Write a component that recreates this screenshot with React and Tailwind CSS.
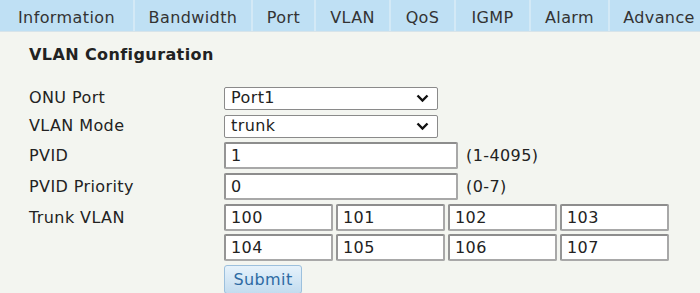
import React from "react";

const tabs = [
  ["Information", "w-[133px]"],
  ["Bandwidth", "w-[118px]"],
  ["Port", "w-[63px]"],
  ["VLAN", "w-[75px]"],
  ["QoS", "w-[65px]"],
  ["IGMP", "w-[75px]"],
  ["Alarm", "w-[79px]"],
  ["Advance", "w-[100px]"],
];

function Chevron() {
  return (
    <svg width="13" height="9" viewBox="0 0 13 9" className="absolute right-[8px] top-1/2 -translate-y-1/2">
      <path d="M1.5 2 L6.5 7 L11.5 2" fill="none" stroke="#111" strokeWidth="2.4" />
    </svg>
  );
}

function Select({ value }) {
  return (
    <div className="relative w-[214px] h-[23px] bg-white border border-[#8a8a8a] rounded-[2px] pl-[6px] flex items-center text-[#222]">
      {value}
      <Chevron />
    </div>
  );
}

function Input({ value, w }) {
  return (
    <div className={`${w} h-[27px] bg-white border-2 border-[#a8a8a8] border-t-[#8d8d8d] border-l-[#959595] rounded-[2px] pl-[5px] flex items-center text-[#222]`}>
      {value}
    </div>
  );
}

export default function App() {
  return (
    <div
      className="w-[700px] h-[293px] overflow-hidden bg-[#f3f5f0] text-[#222] text-[16px] tracking-[0.4px] leading-[24px]"
      style={{ fontFamily: '"DejaVu Sans", Verdana, sans-serif' }}
    >
      <div className="flex h-[32px] bg-[#bfe0f4] border-b border-[#d7e4ea]">
        {tabs.map(([t, w], i) => (
          <div key={t} className={`${w} shrink-0 flex items-center justify-center pt-[4px] text-[#333] ${i > 0 ? "border-l-2 border-[#d3e9f6]" : ""}`}>
            {t}
          </div>
        ))}
      </div>
      <div className="pl-[29px] pt-[12px]">
        <div className="font-bold h-[22px] flex items-center text-[#222]">VLAN Configuration</div>
        <div className="mt-[20px] grid grid-cols-[195px_1fr] gap-y-[4px] items-center">
          <div>ONU Port</div>
          <Select value="Port1" />
          <div>VLAN Mode</div>
          <Select value="trunk" />
          <div>PVID</div>
          <div className="flex items-center gap-[8px]">
            <Input value="1" w="w-[234px]" />
            <span>(1-4095)</span>
          </div>
          <div>PVID Priority</div>
          <div className="flex items-center gap-[8px]">
            <Input value="0" w="w-[234px]" />
            <span>(0-7)</span>
          </div>
          <div className="self-start pt-[2px]">Trunk VLAN</div>
          <div className="grid grid-cols-[109px_109px_109px_109px] gap-[3px]">
            {["100", "101", "102", "103", "104", "105", "106", "107"].map((v) => (
              <Input key={v} value={v} w="w-[109px]" />
            ))}
          </div>
          <div></div>
          <div className="w-[78px] h-[29px] rounded-[3px] border border-[#9cc0dd] bg-gradient-to-b from-[#e6f2fb] to-[#c3dcef] text-[#2d6aa3] flex items-center justify-center">
            Submit
          </div>
        </div>
      </div>
    </div>
  );
}
